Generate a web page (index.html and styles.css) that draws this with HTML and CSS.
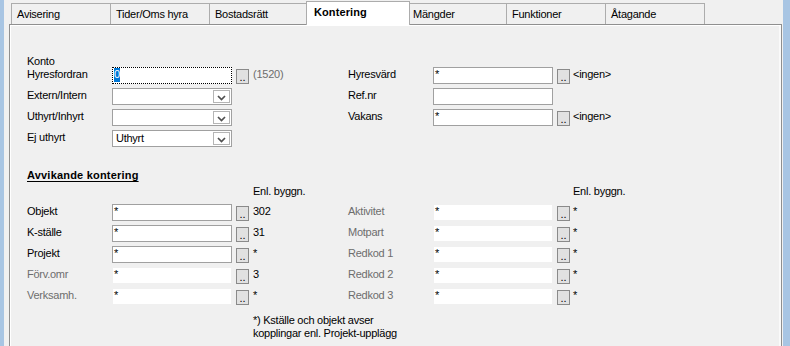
FILE: index.html
```html
<!DOCTYPE html>
<html lang="sv">
<head>
<meta charset="utf-8">
<title>Kontering</title>
<link rel="stylesheet" href="styles.css">
</head>
<body>
<div class="window">
  <div class="edge edge-l"></div>
  <div class="main">
    <div class="tabs">
      <div class="tab">Avisering</div>
      <div class="tab">Tider/Oms hyra</div>
      <div class="tab">Bostadsrätt</div>
      <div class="tab sel">Kontering</div>
      <div class="tab">Mängder</div>
      <div class="tab">Funktioner</div>
      <div class="tab">Åtagande</div>
    </div>
    <div class="panel">
      <div class="top">
        <div class="col col-l">
          <div class="caption">Konto</div>
          <div class="row">
            <span class="lbl">Hyresfordran</span>
            <span class="tb focus"><span class="hl">0</span></span>
            <span class="btn">..</span>
            <span class="val dim">(1520)</span>
          </div>
          <div class="row">
            <span class="lbl">Extern/Intern</span>
            <span class="cb"><span class="cb-text"></span><span class="cb-drop"><svg width="9" height="6" viewBox="0 0 9 6"><path d="M1 1 L4.5 4.5 L8 1" fill="none" stroke="#505050" stroke-width="1.7"/></svg></span></span>
          </div>
          <div class="row">
            <span class="lbl">Uthyrt/Inhyrt</span>
            <span class="cb"><span class="cb-text"></span><span class="cb-drop"><svg width="9" height="6" viewBox="0 0 9 6"><path d="M1 1 L4.5 4.5 L8 1" fill="none" stroke="#505050" stroke-width="1.7"/></svg></span></span>
          </div>
          <div class="row">
            <span class="lbl">Ej uthyrt</span>
            <span class="cb"><span class="cb-text">Uthyrt</span><span class="cb-drop"><svg width="9" height="6" viewBox="0 0 9 6"><path d="M1 1 L4.5 4.5 L8 1" fill="none" stroke="#505050" stroke-width="1.7"/></svg></span></span>
          </div>
        </div>
        <div class="col col-r">
          <div class="caption"></div>
          <div class="row">
            <span class="lbl">Hyresvärd</span>
            <span class="tb">*</span>
            <span class="btn">..</span>
            <span class="val">&lt;ingen&gt;</span>
          </div>
          <div class="row">
            <span class="lbl">Ref.nr</span>
            <span class="tb"></span>
          </div>
          <div class="row">
            <span class="lbl">Vakans</span>
            <span class="tb">*</span>
            <span class="btn">..</span>
            <span class="val">&lt;ingen&gt;</span>
          </div>
        </div>
      </div>

      <div class="heading">Avvikande kontering</div>
      <div class="enl"><span class="enl-l">Enl. byggn.</span><span class="enl-r">Enl. byggn.</span></div>

      <div class="grid2">
        <div class="col col-l">
          <div class="row">
            <span class="lbl">Objekt</span>
            <span class="tb">*</span>
            <span class="btn">..</span>
            <span class="val">302</span>
          </div>
          <div class="row">
            <span class="lbl">K-ställe</span>
            <span class="tb">*</span>
            <span class="btn">..</span>
            <span class="val">31</span>
          </div>
          <div class="row">
            <span class="lbl">Projekt</span>
            <span class="tb">*</span>
            <span class="btn">..</span>
            <span class="val">*</span>
          </div>
          <div class="row">
            <span class="lbl dim">Förv.omr</span>
            <span class="tb off">*</span>
            <span class="btn">..</span>
            <span class="val">3</span>
          </div>
          <div class="row">
            <span class="lbl dim">Verksamh.</span>
            <span class="tb off">*</span>
            <span class="btn">..</span>
            <span class="val">*</span>
          </div>
        </div>
        <div class="col col-r">
          <div class="row">
            <span class="lbl dim">Aktivitet</span>
            <span class="tb off">*</span>
            <span class="btn">..</span>
            <span class="val">*</span>
          </div>
          <div class="row">
            <span class="lbl dim">Motpart</span>
            <span class="tb off">*</span>
            <span class="btn">..</span>
            <span class="val">*</span>
          </div>
          <div class="row">
            <span class="lbl dim">Redkod 1</span>
            <span class="tb off">*</span>
            <span class="btn">..</span>
            <span class="val">*</span>
          </div>
          <div class="row">
            <span class="lbl dim">Redkod 2</span>
            <span class="tb off">*</span>
            <span class="btn">..</span>
            <span class="val">*</span>
          </div>
          <div class="row">
            <span class="lbl dim">Redkod 3</span>
            <span class="tb off">*</span>
            <span class="btn">..</span>
            <span class="val">*</span>
          </div>
        </div>
      </div>

      <div class="note">*) Kställe och objekt avser<br>kopplingar enl. Projekt-upplägg</div>
    </div>
  </div>
  <div class="edge edge-r"></div>
</div>
</body>
</html>
```

FILE: styles.css
```css
* { box-sizing: border-box; }
html, body { margin: 0; padding: 0; }
body {
  background: #f0f0f0;
  font-family: "Liberation Sans", Arial, sans-serif;
  font-size: 11px;
  line-height: 13px;
  color: #000;
  letter-spacing: -0.25px;
  overflow: hidden;
}
.window {
  display: flex;
  align-items: flex-start;
  height: 346px;
  overflow: hidden;
}
.edge { flex: none; height: 346px; background: #a8c5e3; }
.edge-l { width: 4px; }
.edge-r { width: 7px; }
.main {
  flex: none;
  width: 779px;
  height: 390px;
  padding: 0 1px 0 5px;
  display: flex;
  flex-direction: column;
}
.tabs {
  flex: none;
  height: 24px;
  display: flex;
  align-items: flex-end;
  padding-left: 2px;
}
.tab {
  flex: none;
  width: 100px;
  height: 21px;
  border: 1px solid #acacac;
  border-bottom: none;
  background: #f0f0f0;
  padding: 4px 0 0 5px;
  white-space: nowrap;
}
.tab + .tab { margin-left: -1px; }
.tab.sel {
  width: 104px;
  height: 24px;
  margin: 0 -2px -1px -3px;
  background: #fff;
  font-weight: bold;
  letter-spacing: 0.1px;
  padding-left: 7px;
  position: relative;
  z-index: 1;
}
.panel {
  flex: 1;
  border: 1px solid #8f8f8f;
  background: #f0f0f0;
  padding: 30px 0 0 17px;
  box-shadow: inset 1px 1px 0 #fff, inset -2px 0 0 #fafafa;
}
.top, .grid2 { display: flex; }
.col-l { flex: none; width: 321px; }
.caption { height: 12px; white-space: nowrap; }
.row {
  display: flex;
  align-items: flex-start;
  height: 17px;
  margin-bottom: 4px;
}
.lbl {
  flex: none;
  width: 85px;
  padding-top: 1px;
  white-space: nowrap;
}
.dim { color: #6d6d6d; }
.tb {
  flex: none;
  width: 120px;
  height: 17px;
  border: 1px solid #a0a0a0;
  background: #fff;
  padding: 0 1px;
  line-height: 13px;
  overflow: hidden;
}
.tb.off { border-color: #f0f0f0; }
.tb.focus { border: 1px dotted #000; }
.hl {
  display: inline-block;
  height: 14px;
  background: #0078d7;
  color: #fff;
}
.btn {
  flex: none;
  width: 13px;
  height: 15px;
  margin: 2px 0 0 4px;
  border: 1px solid #8a8a8a;
  background: #e1e1e1;
  text-align: center;
  padding-top: 1px;
  letter-spacing: 0;
}
.val {
  margin-left: 4px;
  padding-top: 1px;
  white-space: nowrap;
}
.col-r .val { margin-left: 3px; }
.cb {
  flex: none;
  display: flex;
  width: 120px;
  height: 17px;
  border: 1px solid #a0a0a0;
  background: #fff;
}
.cb-text {
  flex: 1;
  padding: 1px 0 0 3px;
  white-space: nowrap;
}
.cb-drop {
  flex: none;
  width: 17px;
  margin: 1px 1px 1px 0;
  border: 1px solid #b5b5b5;
  display: flex;
  align-items: flex-end;
  justify-content: center;
  padding-bottom: 1px;
}
.cb-drop svg { display: block; }
.heading {
  margin-top: 18px;
  font-weight: bold;
  text-decoration: underline;
  text-underline-offset: 2px;
  letter-spacing: 0.2px;
  white-space: nowrap;
}
.enl {
  display: flex;
  height: 13px;
  margin: 3px 0 6px;
  white-space: nowrap;
}
.enl-l { flex: none; width: 321px; padding-left: 226px; }
.enl-r { padding-left: 225px; }
.note {
  margin-top: 5px;
  padding-left: 226px;
  white-space: nowrap;
}
```
